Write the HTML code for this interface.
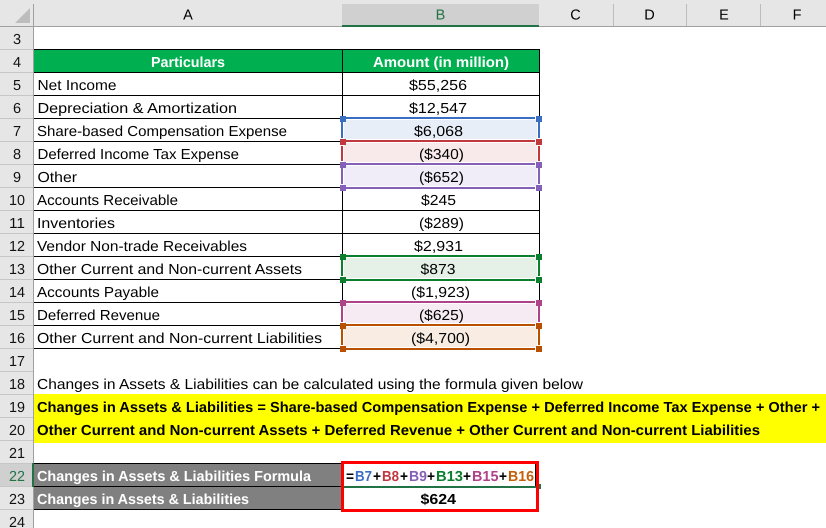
<!DOCTYPE html>
<html><head><meta charset="utf-8"><style>
html,body{margin:0;padding:0;background:#fff;width:826px;height:528px;overflow:hidden}
svg{display:block}
text{font-family:"Liberation Sans",sans-serif;font-size:14.5px;fill:#000;text-rendering:geometricPrecision}
.b{font-weight:bold}
.w{fill:#fff}
.h{fill:#111}
</style></head><body>
<svg width="826" height="528" viewBox="0 0 826 528" xmlns="http://www.w3.org/2000/svg" shape-rendering="crispEdges">
<!-- headers -->
<rect x="0" y="0" width="826" height="27" fill="#e6e6e6"/>
<rect x="0" y="0" width="33" height="528" fill="#e6e6e6"/>
<rect x="342" y="4" width="197" height="21" fill="#d0d0d0"/>
<rect x="342" y="25" width="197" height="2" fill="#217346"/>
<rect x="0" y="26" width="342" height="1" fill="#a0a0a0"/>
<rect x="539" y="26" width="287" height="1" fill="#a0a0a0"/>
<rect x="33" y="4" width="1" height="524" fill="#a0a0a0"/>
<rect x="613" y="4" width="1" height="22" fill="#bcbcbc"/>
<rect x="686" y="4" width="1" height="22" fill="#bcbcbc"/>
<rect x="760" y="4" width="1" height="22" fill="#bcbcbc"/>
<polygon points="15,23 30,23 30,8" fill="#bdbdbd" shape-rendering="auto"/>
<!-- row header separators -->
<g fill="#c6c6c6">
<rect x="0" y="49" width="33" height="1"/><rect x="0" y="72" width="33" height="1"/><rect x="0" y="95" width="33" height="1"/><rect x="0" y="118" width="33" height="1"/><rect x="0" y="141" width="33" height="1"/><rect x="0" y="164" width="33" height="1"/><rect x="0" y="187" width="33" height="1"/><rect x="0" y="210" width="33" height="1"/><rect x="0" y="233" width="33" height="1"/><rect x="0" y="256" width="33" height="1"/><rect x="0" y="279" width="33" height="1"/><rect x="0" y="302" width="33" height="1"/><rect x="0" y="325" width="33" height="1"/><rect x="0" y="348" width="33" height="1"/><rect x="0" y="371" width="33" height="1"/><rect x="0" y="394" width="33" height="1"/><rect x="0" y="417" width="33" height="1"/><rect x="0" y="440" width="33" height="1"/><rect x="0" y="463" width="33" height="1"/><rect x="0" y="486" width="33" height="1"/><rect x="0" y="509" width="33" height="1"/>
</g>
<rect x="0" y="464" width="33" height="22" fill="#d0d0d0"/>
<rect x="32" y="463" width="2" height="24" fill="#217346"/>
<!-- table header -->
<rect x="34" y="50" width="505" height="22" fill="#00b050"/>
<!-- range fills -->
<rect x="344" y="120" width="193" height="19" fill="#e7eef8"/>
<rect x="344" y="143" width="193" height="19" fill="#f8eaea"/>
<rect x="344" y="166" width="193" height="20" fill="#f0ecf8"/>
<rect x="344" y="258" width="193" height="20" fill="#e5f1e7"/>
<rect x="344" y="304" width="193" height="19" fill="#f6ebf3"/>
<rect x="344" y="327" width="193" height="20" fill="#f8ece3"/>
<!-- table lines -->
<g fill="#000">
<rect x="34" y="49" width="506" height="1"/><rect x="34" y="72" width="506" height="1"/><rect x="34" y="95" width="506" height="1"/><rect x="34" y="118" width="306" height="1"/><rect x="34" y="141" width="306" height="1"/><rect x="34" y="164" width="306" height="1"/><rect x="34" y="187" width="306" height="1"/><rect x="34" y="210" width="506" height="1"/><rect x="34" y="233" width="506" height="1"/><rect x="34" y="256" width="306" height="1"/><rect x="34" y="279" width="306" height="1"/><rect x="34" y="302" width="306" height="1"/><rect x="34" y="325" width="306" height="1"/><rect x="34" y="348" width="306" height="1"/>
<rect x="342" y="49" width="1" height="67"/><rect x="539" y="49" width="1" height="67"/>
<rect x="342" y="190" width="1" height="64"/><rect x="539" y="190" width="1" height="64"/>
<rect x="342" y="282" width="1" height="18"/><rect x="539" y="282" width="1" height="18"/>
</g>
<!-- coloured ranges -->
<g fill="#3a6ec4">
<rect x="346" y="117" width="189" height="2"/><rect x="341" y="122" width="2" height="16"/><rect x="538" y="122" width="2" height="16"/>
<rect x="340" y="116" width="6" height="6"/><rect x="536" y="116" width="6" height="6"/>
</g>
<g fill="#c0393f">
<rect x="346" y="140" width="189" height="2"/><rect x="341" y="146" width="2" height="15"/><rect x="538" y="146" width="2" height="15"/>
<rect x="340" y="139" width="6" height="6"/><rect x="536" y="139" width="6" height="6"/>
</g>
<g fill="#8560b8">
<rect x="346" y="163" width="189" height="2"/><rect x="346" y="187" width="189" height="2"/><rect x="341" y="168" width="2" height="16"/><rect x="538" y="168" width="2" height="16"/>
<rect x="340" y="162" width="6" height="6"/><rect x="536" y="162" width="6" height="6"/><rect x="340" y="185" width="6" height="6"/><rect x="536" y="185" width="6" height="6"/>
</g>
<g fill="#0b7f2d">
<rect x="346" y="255" width="189" height="2"/><rect x="346" y="279" width="189" height="2"/><rect x="341" y="260" width="2" height="16"/><rect x="538" y="260" width="2" height="16"/>
<rect x="340" y="254" width="6" height="6"/><rect x="536" y="254" width="6" height="6"/><rect x="340" y="277" width="6" height="6"/><rect x="536" y="277" width="6" height="6"/>
</g>
<g fill="#b0428a">
<rect x="346" y="301" width="189" height="2"/><rect x="341" y="306" width="2" height="16"/><rect x="538" y="306" width="2" height="16"/>
<rect x="340" y="300" width="6" height="6"/><rect x="536" y="300" width="6" height="6"/>
</g>
<g fill="#b85000">
<rect x="346" y="324" width="189" height="2"/><rect x="346" y="348" width="189" height="2"/><rect x="341" y="329" width="2" height="16"/><rect x="538" y="329" width="2" height="16"/>
<rect x="340" y="323" width="6" height="6"/><rect x="536" y="323" width="6" height="6"/><rect x="340" y="346" width="6" height="6"/><rect x="536" y="346" width="6" height="6"/>
</g>
<!-- yellow -->
<rect x="34" y="394" width="792" height="49" fill="#ffff00"/>
<!-- formula rows -->
<rect x="34" y="464" width="307" height="22" fill="#808080"/>
<rect x="34" y="487" width="307" height="22" fill="#808080"/>
<rect x="34" y="463" width="308" height="1" fill="#000"/>
<rect x="34" y="486" width="308" height="1" fill="#000"/>
<rect x="34" y="509" width="308" height="1" fill="#000"/>
<rect x="344" y="486" width="192" height="2" fill="#217346"/>
<rect x="535" y="464" width="1" height="22" fill="#000"/>
<rect x="539" y="484" width="2" height="5" fill="#217346"/>
<g fill="#ff0000">
<rect x="341" y="461" width="198" height="3"/><rect x="341" y="509" width="198" height="3"/><rect x="341" y="461" width="3" height="51"/><rect x="536" y="461" width="3" height="51"/>
</g>
<!-- column letters -->
<g text-anchor="middle">
<text x="188" y="19.5">A</text><text x="440.5" y="19.5" style="fill:#217346">B</text><text x="575.5" y="19.5">C</text><text x="649.5" y="19.5">D</text><text x="724" y="19.5">E</text><text x="797" y="19.5">F</text>
<text class="h" x="17" y="44">3</text><text class="h" x="17" y="67">4</text><text class="h" x="17" y="90">5</text><text class="h" x="17" y="113">6</text><text class="h" x="17" y="136">7</text><text class="h" x="17" y="159">8</text><text class="h" x="17" y="182">9</text><text class="h" x="17" y="205" textLength="16" lengthAdjust="spacingAndGlyphs">10</text><text class="h" x="17" y="228" textLength="16" lengthAdjust="spacingAndGlyphs">11</text><text class="h" x="17" y="251" textLength="16" lengthAdjust="spacingAndGlyphs">12</text><text class="h" x="17" y="274" textLength="16" lengthAdjust="spacingAndGlyphs">13</text><text class="h" x="17" y="297" textLength="16" lengthAdjust="spacingAndGlyphs">14</text><text class="h" x="17" y="320" textLength="16" lengthAdjust="spacingAndGlyphs">15</text><text class="h" x="17" y="343" textLength="16" lengthAdjust="spacingAndGlyphs">16</text><text class="h" x="17" y="366" textLength="16" lengthAdjust="spacingAndGlyphs">17</text><text class="h" x="17" y="389" textLength="16" lengthAdjust="spacingAndGlyphs">18</text><text class="h" x="17" y="412" textLength="16" lengthAdjust="spacingAndGlyphs">19</text><text class="h" x="17" y="435" textLength="16" lengthAdjust="spacingAndGlyphs">20</text><text class="h" x="17" y="458" textLength="16" lengthAdjust="spacingAndGlyphs">21</text><text x="17" y="481" textLength="16" lengthAdjust="spacingAndGlyphs" style="fill:#217346">22</text><text class="h" x="17" y="504" textLength="16" lengthAdjust="spacingAndGlyphs">23</text><text class="h" x="17" y="527" textLength="16" lengthAdjust="spacingAndGlyphs">24</text>
</g>
<!-- table header text -->
<text class="b w" x="151" y="67" textLength="74" lengthAdjust="spacingAndGlyphs">Particulars</text>
<text class="b w" x="373" y="67" textLength="136" lengthAdjust="spacingAndGlyphs">Amount (in million)</text>
<!-- column A -->
<text x="37.5" y="90" textLength="79" lengthAdjust="spacingAndGlyphs">Net Income</text>
<text x="37.5" y="113" textLength="199.5" lengthAdjust="spacingAndGlyphs">Depreciation &amp; Amortization</text>
<text x="37" y="136" textLength="250" lengthAdjust="spacingAndGlyphs">Share-based Compensation Expense</text>
<text x="37.5" y="159" textLength="201.5" lengthAdjust="spacingAndGlyphs">Deferred Income Tax Expense</text>
<text x="37.5" y="182" textLength="39.5" lengthAdjust="spacingAndGlyphs">Other</text>
<text x="37" y="205" textLength="141" lengthAdjust="spacingAndGlyphs">Accounts Receivable</text>
<text x="37" y="228" textLength="78" lengthAdjust="spacingAndGlyphs">Inventories</text>
<text x="37" y="251" textLength="210" lengthAdjust="spacingAndGlyphs">Vendor Non-trade Receivables</text>
<text x="37" y="274" textLength="265" lengthAdjust="spacingAndGlyphs">Other Current and Non-current Assets</text>
<text x="37" y="297" textLength="122" lengthAdjust="spacingAndGlyphs">Accounts Payable</text>
<text x="37" y="320" textLength="123" lengthAdjust="spacingAndGlyphs">Deferred Revenue</text>
<text x="37" y="343" textLength="285" lengthAdjust="spacingAndGlyphs">Other Current and Non-current Liabilities</text>
<!-- column B -->
<text x="409" y="90" textLength="58" lengthAdjust="spacingAndGlyphs">$55,256</text>
<text x="409" y="113" textLength="58" lengthAdjust="spacingAndGlyphs">$12,547</text>
<text x="414" y="136" textLength="49" lengthAdjust="spacingAndGlyphs">$6,068</text>
<text x="419" y="159" textLength="45" lengthAdjust="spacingAndGlyphs">($340)</text>
<text x="419" y="182" textLength="45" lengthAdjust="spacingAndGlyphs">($652)</text>
<text x="421" y="205" textLength="35" lengthAdjust="spacingAndGlyphs">$245</text>
<text x="419" y="228" textLength="45" lengthAdjust="spacingAndGlyphs">($289)</text>
<text x="414" y="251" textLength="49" lengthAdjust="spacingAndGlyphs">$2,931</text>
<text x="420.5" y="274" textLength="35" lengthAdjust="spacingAndGlyphs">$873</text>
<text x="411" y="297" textLength="59" lengthAdjust="spacingAndGlyphs">($1,923)</text>
<text x="419" y="320" textLength="45" lengthAdjust="spacingAndGlyphs">($625)</text>
<text x="411" y="343" textLength="59" lengthAdjust="spacingAndGlyphs">($4,700)</text>
<!-- notes -->
<text x="37" y="389" textLength="546" lengthAdjust="spacingAndGlyphs">Changes in Assets &amp; Liabilities can be calculated using the formula given below</text>
<text class="b" x="37" y="412" textLength="783" lengthAdjust="spacingAndGlyphs">Changes in Assets &amp; Liabilities = Share-based Compensation Expense + Deferred Income Tax Expense + Other +</text>
<text class="b" x="37" y="435" textLength="723" lengthAdjust="spacingAndGlyphs">Other Current and Non-current Assets + Deferred Revenue + Other Current and Non-current Liabilities</text>
<text class="b w" x="37" y="481" textLength="274" lengthAdjust="spacingAndGlyphs">Changes in Assets &amp; Liabilities Formula</text>
<text class="b w" x="37" y="504" textLength="212" lengthAdjust="spacingAndGlyphs">Changes in Assets &amp; Liabilities</text>
<!-- formula -->
<text class="b" x="346" y="481" textLength="8" lengthAdjust="spacingAndGlyphs">=</text>
<text class="b" x="355" y="481" textLength="17" lengthAdjust="spacingAndGlyphs" style="fill:#3a6ec4">B7</text>
<text class="b" x="373" y="481" textLength="8" lengthAdjust="spacingAndGlyphs">+</text>
<text class="b" x="382" y="481" textLength="17" lengthAdjust="spacingAndGlyphs" style="fill:#c0393f">B8</text>
<text class="b" x="400" y="481" textLength="8" lengthAdjust="spacingAndGlyphs">+</text>
<text class="b" x="409" y="481" textLength="18" lengthAdjust="spacingAndGlyphs" style="fill:#8560b8">B9</text>
<text class="b" x="427" y="481" textLength="8" lengthAdjust="spacingAndGlyphs">+</text>
<text class="b" x="436" y="481" textLength="27" lengthAdjust="spacingAndGlyphs" style="fill:#0b7f2d">B13</text>
<text class="b" x="463" y="481" textLength="8" lengthAdjust="spacingAndGlyphs">+</text>
<text class="b" x="472" y="481" textLength="26.5" lengthAdjust="spacingAndGlyphs" style="fill:#b0428a">B15</text>
<text class="b" x="499" y="481" textLength="8" lengthAdjust="spacingAndGlyphs">+</text>
<text class="b" x="508" y="481" textLength="26" lengthAdjust="spacingAndGlyphs" style="fill:#c4600a">B16</text>
<text class="b" x="420.5" y="504" textLength="35.5" lengthAdjust="spacingAndGlyphs">$624</text>
</svg>
</body></html>
